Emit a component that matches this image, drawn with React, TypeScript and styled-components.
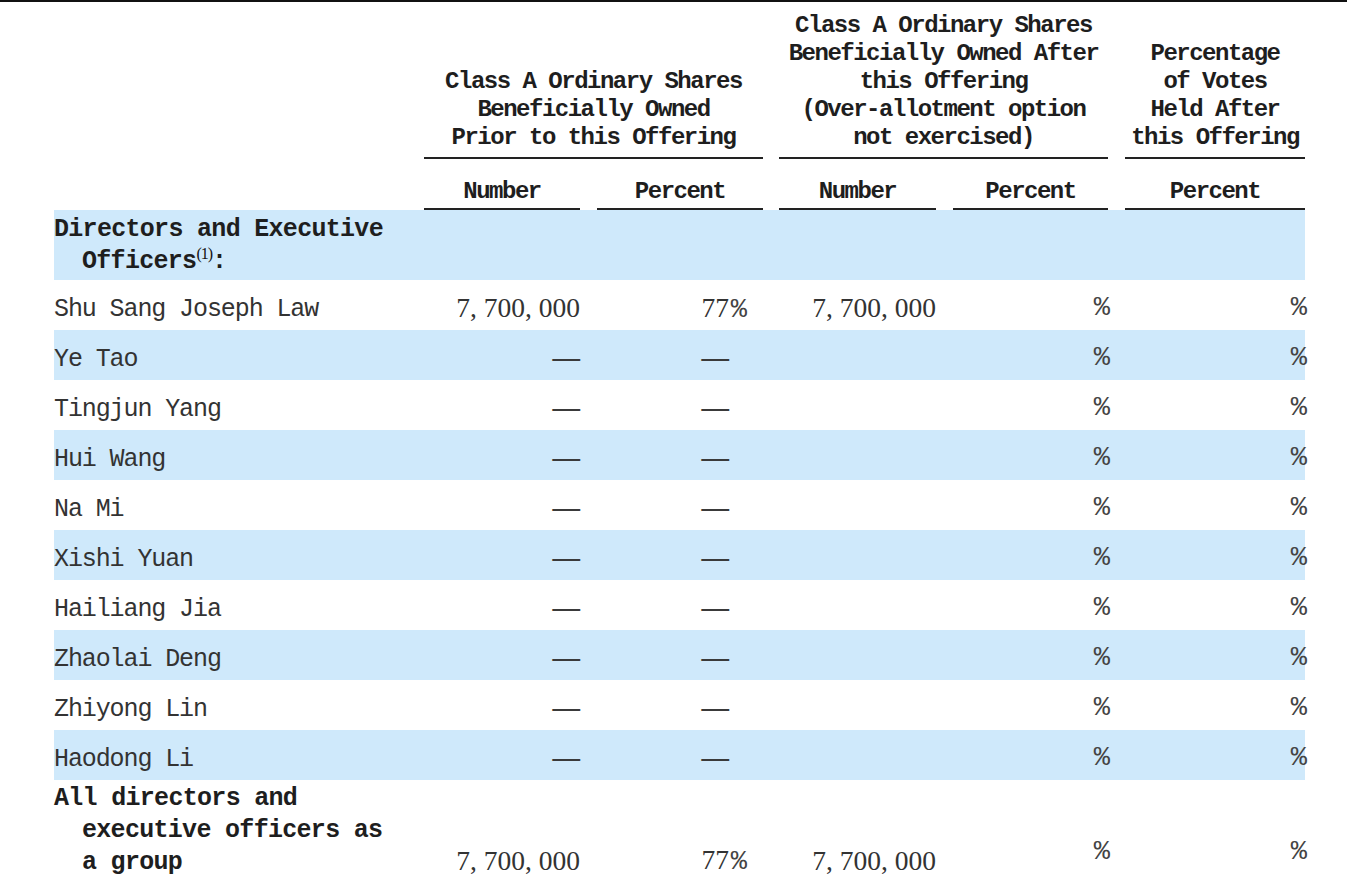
import React from "react";
import styled, { createGlobalStyle } from "styled-components";

const Global = createGlobalStyle`
  html, body { margin: 0; padding: 0; background: #ffffff; }
  body { width: 1347px; height: 896px; overflow: hidden; }
`;

const Page = styled.div`
  width: 1347px;
  height: 896px;
  box-sizing: border-box;
  border-top: 2px solid #111;
  background: #fff;
  padding: 10px 0 0 54px;
  color: #2a2a2a;
`;

const cols = "370px 156px 183px 173px 172px 197px";

const HeadGrid = styled.div`
  display: grid;
  grid-template-columns: ${cols};
  width: 1251px;
`;

const GroupHead = styled.div<{ $span: number; $pad: number }>`
  grid-column: span ${(p) => p.$span};
  padding-left: ${(p) => p.$pad}px;
  display: flex;
  align-items: flex-end;
`;

const GroupInner = styled.div`
  flex: 1;
  border-bottom: 2px solid #222;
  padding-bottom: 5px;
  text-align: center;
  font-family: "Liberation Mono", monospace;
  font-weight: 700;
  font-size: 24px;
  letter-spacing: -1.5px;
  line-height: 28px;
  color: #1e1e1e;
  white-space: pre;
`;

const SubHead = styled.div<{ $pad: number }>`
  padding-left: ${(p) => p.$pad}px;
  padding-top: 16px;
`;

const SubInner = styled.div`
  border-bottom: 2px solid #222;
  text-align: center;
  font-family: "Liberation Mono", monospace;
  font-weight: 700;
  font-size: 24px;
  letter-spacing: -1.5px;
  line-height: 33px;
  color: #1e1e1e;
`;

const Row = styled.div<{ $blue?: boolean; $h: number }>`
  display: grid;
  grid-template-columns: ${cols};
  width: 1251px;
  height: ${(p) => p.$h}px;
  background: ${(p) => (p.$blue ? "#cfe9fb" : "transparent")};
`;

const Label = styled.div<{ $bold?: boolean }>`
  font-family: "Liberation Mono", monospace;
  font-weight: ${(p) => (p.$bold ? 700 : 400)};
  font-size: 25px;
  letter-spacing: ${(p) => (p.$bold ? "-0.7px" : "-1.1px")};
  color: ${(p) => (p.$bold ? "#1e1e1e" : "#333")};
  display: flex;
  align-items: center;
  white-space: nowrap;
  padding-top: ${(p) => (p.$bold ? "0" : "8px")};
  box-sizing: border-box;
`;

const Wrapped = styled.div<{ $top: number }>`
  line-height: 32px;
  padding-top: ${(p) => p.$top}px;
  align-self: flex-start;
`;

const Indent = styled.div`
  padding-left: 28px;
`;

const Sup = styled.sup`
  font-size: 16px;
  letter-spacing: -1px;
  vertical-align: 9px;
  line-height: 0;
  font-family: "Liberation Serif", serif;
  font-weight: 400;
  color: #111;
`;

const Cell = styled.div<{ $pr?: number; $bottom?: boolean }>`
  display: flex;
  justify-content: flex-end;
  align-items: ${(p) => (p.$bottom ? "flex-end" : "center")};
  padding-right: ${(p) => p.$pr ?? 0}px;
  padding-bottom: ${(p) => (p.$bottom ? "9px" : "0")};
  font-family: "Liberation Serif", serif;
  font-size: 27.5px;
  color: #333;
  padding-top: 6px;
  box-sizing: border-box;
`;

const Dash = styled.span`
  font-family: "Liberation Serif", serif;
  font-size: 27.5px;
  color: #3a3a3a;
  font-weight: 700;
  position: relative;
  top: -1px;
`;

const PctSign = styled.span<{ $raise?: number }>`
  font-family: "Liberation Mono", monospace;
  font-size: 27px;
  letter-spacing: -2px;
  color: #444;
  position: relative;
  top: ${(p) => -(p.$raise ?? 0)}px;
`;

const Suffix = styled.span`
  display: inline-block;
  width: 16px;
  text-align: right;
`;

type Person = { name: string; n1?: string; p1?: string; n2?: string };

const people: Person[] = [
  { name: "Shu Sang Joseph Law", n1: "7, 700, 000", p1: "77", n2: "7, 700, 000" },
  { name: "Ye Tao" },
  { name: "Tingjun Yang" },
  { name: "Hui Wang" },
  { name: "Na Mi" },
  { name: "Xishi Yuan" },
  { name: "Hailiang Jia" },
  { name: "Zhaolai Deng" },
  { name: "Zhiyong Lin" },
  { name: "Haodong Li" },
];

const P1 = ({ v, bottom }: { v?: string; bottom?: boolean }) => (
  <Cell $pr={18} $bottom={bottom}>
    {v ? (
      <span>
        {v}
        <Suffix>
          <PctSign>%</PctSign>
        </Suffix>
      </span>
    ) : (
      <span>
        <Dash>—</Dash>
        <Suffix />
      </span>
    )}
  </Cell>
);

export default function App() {
  return (
    <>
      <Global />
      <Page>
        <HeadGrid>
          <div />
          <GroupHead $span={2} $pad={0}>
            <GroupInner>{"Class A Ordinary Shares\nBeneficially Owned\nPrior to this Offering"}</GroupInner>
          </GroupHead>
          <GroupHead $span={2} $pad={16}>
            <GroupInner>
              {"Class A Ordinary Shares\nBeneficially Owned After\nthis Offering\n(Over-allotment option\nnot exercised)"}
            </GroupInner>
          </GroupHead>
          <GroupHead $span={1} $pad={17}>
            <GroupInner>{"Percentage\nof Votes\nHeld After\nthis Offering"}</GroupInner>
          </GroupHead>

          <div />
          <SubHead $pad={0}>
            <SubInner>Number</SubInner>
          </SubHead>
          <SubHead $pad={17}>
            <SubInner>Percent</SubInner>
          </SubHead>
          <SubHead $pad={16}>
            <SubInner>Number</SubInner>
          </SubHead>
          <SubHead $pad={17}>
            <SubInner>Percent</SubInner>
          </SubHead>
          <SubHead $pad={17}>
            <SubInner>Percent</SubInner>
          </SubHead>
        </HeadGrid>

        <Row $blue $h={70}>
          <Label $bold>
            <Wrapped $top={4}>
              <div>Directors and Executive</div>
              <Indent>
                Officers<Sup>(1)</Sup>:
              </Indent>
            </Wrapped>
          </Label>
          <div />
          <div />
          <div />
          <div />
          <div />
        </Row>

        {people.map((p, i) => (
          <Row key={p.name} $blue={i % 2 === 1} $h={50}>
            <Label>{p.name}</Label>
            <Cell>{p.n1 ? p.n1 : <Dash>—</Dash>}</Cell>
            <P1 v={p.p1} />
            <Cell>{p.n2 ?? ""}</Cell>
            <Cell>
              <PctSign>%</PctSign>
            </Cell>
            <Cell>
              <PctSign>%</PctSign>
            </Cell>
          </Row>
        ))}

        <Row $h={106}>
          <Label $bold>
            <Wrapped $top={3}>
              <div>All directors and</div>
              <Indent>executive officers as</Indent>
              <Indent>a group</Indent>
            </Wrapped>
          </Label>
          <Cell $bottom>7, 700, 000</Cell>
          <P1 v="77" bottom />
          <Cell $bottom>7, 700, 000</Cell>
          <Cell $bottom>
            <PctSign $raise={10}>%</PctSign>
          </Cell>
          <Cell $bottom>
            <PctSign $raise={10}>%</PctSign>
          </Cell>
        </Row>
      </Page>
    </>
  );
}
